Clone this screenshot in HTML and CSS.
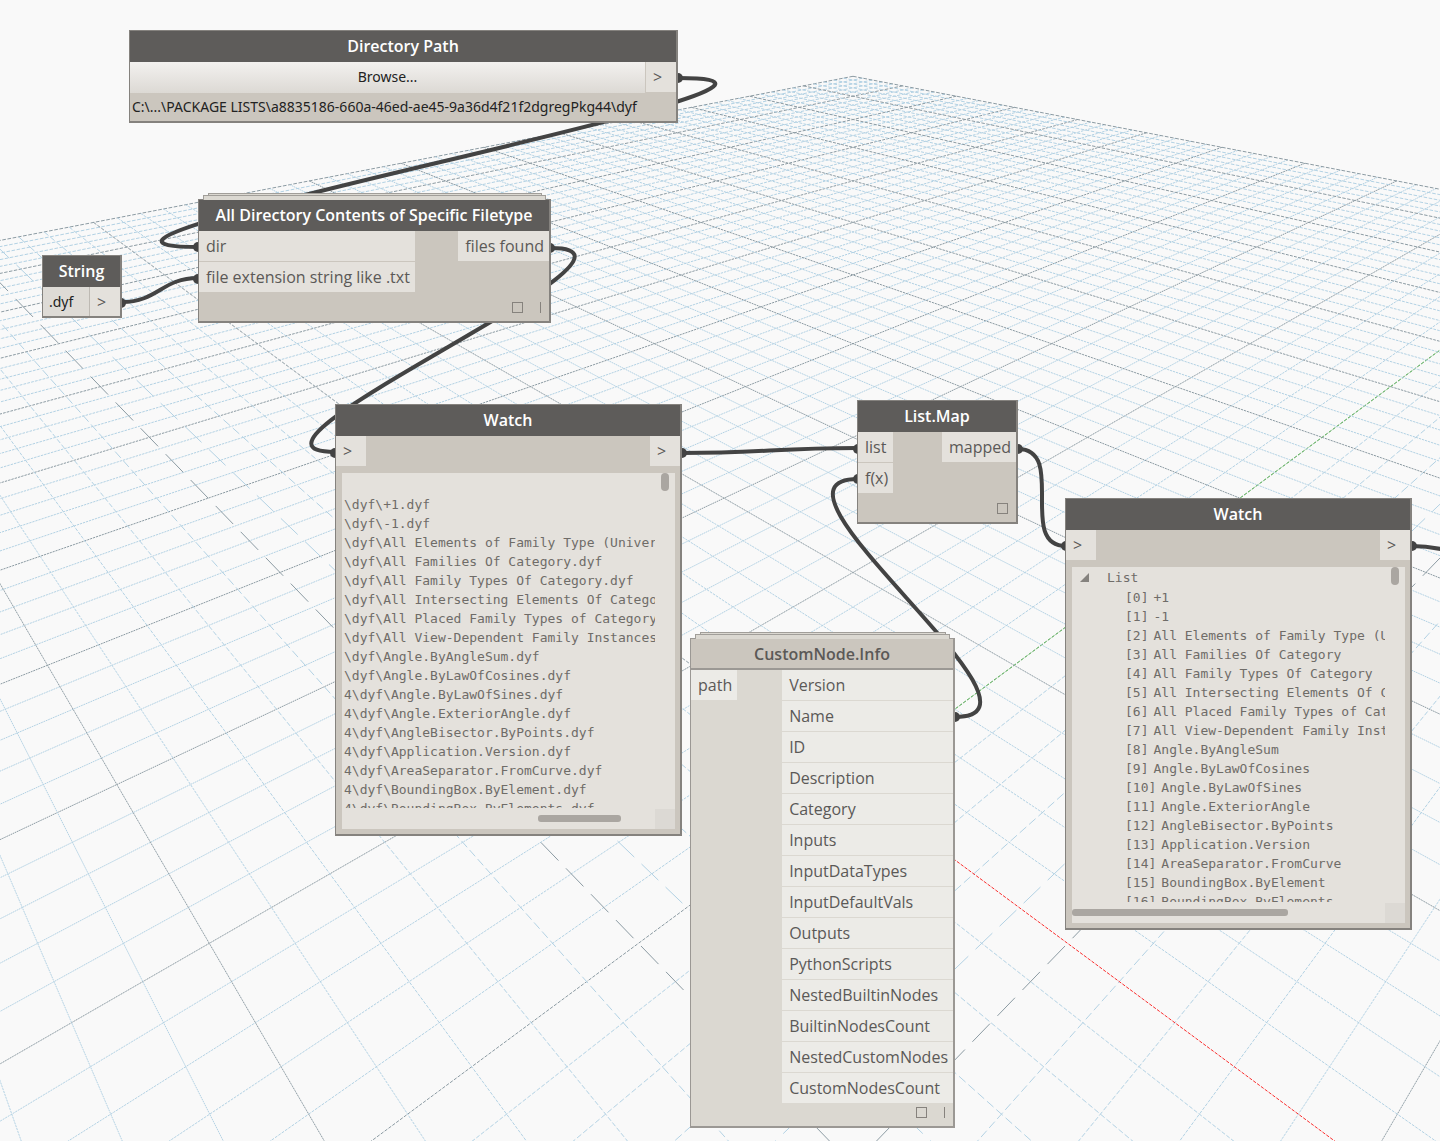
FILE: index.html
```html
<!DOCTYPE html>
<html lang="en">
<head>
    <meta charset="UTF-8">
    <meta name="viewport" content="width=device-width, initial-scale=1.0">
    <title>Package Nodes</title>
    <link rel="stylesheet" href="styles.css">
</head>
<body>
    <main class="workspace">
        <svg class="grid" id="grid" aria-hidden="true"></svg>

        <svg class="wires" aria-hidden="true">
            <path d="M679 78 C908 78 -31 247 198 247"/>
            <path d="M122 302 C158 302 162 278 198 278"/>
            <path d="M551 248 C685 248 201 452 335 452"/>
            <path d="M682 453 C761 453 778 448 857 448"/>
            <path d="M1018 449 C1067 449 1017 546 1066 546"/>
            <path d="M955 717 C1071 717 742 479 858 479"/>
            <path d="M1412 546 C1430 546 1450 550 1470 558"/>
            <g class="ends">
                <circle cx="678" cy="78" r="5"/>
                <circle cx="198" cy="247" r="5"/>
                <circle cx="121" cy="303" r="5"/>
                <circle cx="198" cy="279" r="5"/>
                <circle cx="550" cy="248" r="5"/>
                <circle cx="335" cy="453" r="5"/>
                <circle cx="682" cy="453" r="5"/>
                <circle cx="858" cy="449" r="5"/>
                <circle cx="858" cy="479" r="5"/>
                <circle cx="1018" cy="449" r="5"/>
                <circle cx="1066" cy="546" r="5"/>
                <circle cx="1412" cy="546" r="5"/>
                <circle cx="955" cy="717" r="5"/>
            </g>
        </svg>

        <section class="node node-directory">
            <h2>Directory Path</h2>
            <div class="row">
                <button class="browse" type="button">Browse...</button>
                <span class="port port-arrow">&gt;</span>
            </div>
            <p class="path">C:\...\PACKAGE LISTS\a8835186-660a-46ed-ae45-9a36d4f21f2dgregPkg44\dyf</p>
        </section>

        <section class="node node-string">
            <h2>String</h2>
            <div class="row">
                <input class="value" type="text" value=".dyf" aria-label="String value">
                <span class="port port-arrow">&gt;</span>
            </div>
        </section>

        <section class="node node-contents stacked">
            <h2>All Directory Contents of Specific Filetype</h2>
            <div class="ports">
                <ul class="inputs">
                    <li class="port">dir</li>
                    <li class="port">file extension string like .txt</li>
                </ul>
                <ul class="outputs">
                    <li class="port">files found</li>
                </ul>
            </div>
            <div class="footer"><span class="box"></span><span class="bar"></span></div>
        </section>

        <section class="node node-watch watch-files">
            <h2>Watch</h2>
            <div class="ports">
                <span class="port port-arrow">&gt;</span>
                <span class="port port-arrow">&gt;</span>
            </div>
            <div class="viewer">
                <ul class="lines">
                    <li>\dyf\+1.dyf</li>
                    <li>\dyf\-1.dyf</li>
                    <li>\dyf\All Elements of Family Type (Universal).dyf</li>
                    <li>\dyf\All Families Of Category.dyf</li>
                    <li>\dyf\All Family Types Of Category.dyf</li>
                    <li>\dyf\All Intersecting Elements Of Category.dyf</li>
                    <li>\dyf\All Placed Family Types of Category.dyf</li>
                    <li>\dyf\All View-Dependent Family Instances.dyf</li>
                    <li>\dyf\Angle.ByAngleSum.dyf</li>
                    <li>\dyf\Angle.ByLawOfCosines.dyf</li>
                    <li>4\dyf\Angle.ByLawOfSines.dyf</li>
                    <li>4\dyf\Angle.ExteriorAngle.dyf</li>
                    <li>4\dyf\AngleBisector.ByPoints.dyf</li>
                    <li>4\dyf\Application.Version.dyf</li>
                    <li>4\dyf\AreaSeparator.FromCurve.dyf</li>
                    <li>4\dyf\BoundingBox.ByElement.dyf</li>
                    <li>4\dyf\BoundingBox.ByElements.dyf</li>
                </ul>
                <span class="thumb-y"></span>
                <span class="thumb-x"></span>
                <span class="corner"></span>
            </div>
        </section>

        <section class="node node-map">
            <h2>List.Map</h2>
            <div class="ports">
                <ul class="inputs">
                    <li class="port">list</li>
                    <li class="port">f(x)</li>
                </ul>
                <ul class="outputs">
                    <li class="port">mapped</li>
                </ul>
            </div>
            <div class="footer"><span class="box"></span></div>
        </section>

        <section class="node node-info stacked">
            <h2>CustomNode.Info</h2>
            <div class="ports">
                <ul class="inputs">
                    <li class="port">path</li>
                </ul>
                <ul class="outputs">
                    <li class="port">Version</li>
                    <li class="port">Name</li>
                    <li class="port">ID</li>
                    <li class="port">Description</li>
                    <li class="port">Category</li>
                    <li class="port">Inputs</li>
                    <li class="port">InputDataTypes</li>
                    <li class="port">InputDefaultVals</li>
                    <li class="port">Outputs</li>
                    <li class="port">PythonScripts</li>
                    <li class="port">NestedBuiltinNodes</li>
                    <li class="port">BuiltinNodesCount</li>
                    <li class="port">NestedCustomNodes</li>
                    <li class="port">CustomNodesCount</li>
                </ul>
            </div>
            <div class="footer"><span class="box"></span><span class="bar"></span></div>
        </section>

        <section class="node node-watch watch-names">
            <h2>Watch</h2>
            <div class="ports">
                <span class="port port-arrow">&gt;</span>
                <span class="port port-arrow">&gt;</span>
            </div>
            <div class="viewer">
                <div class="lines">
                    <p class="tree-head">
                        <svg width="9" height="9" viewBox="0 0 9 9"><path d="M9 0 V9 H0 Z"/></svg>
                        List
                    </p>
                    <ul class="tree">
                        <li><span>[0]</span>+1</li>
                        <li><span>[1]</span>-1</li>
                        <li><span>[2]</span>All Elements of Family Type (Universal)</li>
                        <li><span>[3]</span>All Families Of Category</li>
                        <li><span>[4]</span>All Family Types Of Category</li>
                        <li><span>[5]</span>All Intersecting Elements Of Category</li>
                        <li><span>[6]</span>All Placed Family Types of Category</li>
                        <li><span>[7]</span>All View-Dependent Family Instances</li>
                        <li><span>[8]</span>Angle.ByAngleSum</li>
                        <li><span>[9]</span>Angle.ByLawOfCosines</li>
                        <li><span>[10]</span>Angle.ByLawOfSines</li>
                        <li><span>[11]</span>Angle.ExteriorAngle</li>
                        <li><span>[12]</span>AngleBisector.ByPoints</li>
                        <li><span>[13]</span>Application.Version</li>
                        <li><span>[14]</span>AreaSeparator.FromCurve</li>
                        <li><span>[15]</span>BoundingBox.ByElement</li>
                        <li><span>[16]</span>BoundingBox.ByElements</li>
                    </ul>
                </div>
                <span class="thumb-y"></span>
                <span class="thumb-x"></span>
                <span class="corner"></span>
            </div>
        </section>
    </main>

    <script src="grid.js"></script>
</body>
</html>
```
FILE: styles.css
```css
* {
    box-sizing: border-box;
}
body {
    margin: 0;
    background-color: #f9f9f9;
    font-family: "Open Sans", "Noto Sans", sans-serif;
    font-size: 16px;
    color: #5b5957;
}
h2, p, ul {
    margin: 0;
    padding: 0;
}
ul {
    list-style: none;
}
.workspace {
    position: relative;
    min-height: 100vh;
    overflow: hidden;
}
.grid, .wires {
    position: absolute;
    top: 0;
    left: 0;
    width: 100%;
    height: 100%;
}
.grid line {
    stroke-width: 1;
}
.grid .minor {
    stroke: #b3d2e4;
}
.grid .major {
    stroke: #8c9ba3;
}
.grid .axis-x {
    stroke: #fb3030;
}
.grid .axis-y {
    stroke: #3f9f3f;
}
.wires path {
    fill: none;
    stroke: #434343;
    stroke-width: 4;
}
.wires .ends {
    fill: #434343;
}

/* nodes */
.node {
    position: absolute;
    border: 1px solid #85827e;
    border-width: 1px 2px 2px 1px;
    background-color: #cbc6be;
}
.node h2 {
    height: 31px;
    line-height: 31px;
    background-color: #5e5c5a;
    color: #fff;
    font-size: 16px;
    font-weight: 600;
    text-align: center;
    white-space: nowrap;
}
.row, .ports {
    display: flex;
    justify-content: space-between;
}
.inputs, .outputs {
    display: flex;
    flex-direction: column;
    gap: 1px;
}
.port {
    height: 30px;
    line-height: 30px;
    padding: 0 5px 0 7px;
    background-color: #e4e1dc;
    white-space: nowrap;
}
.port-arrow {
    width: 30px;
}
.footer {
    display: flex;
    justify-content: flex-end;
    gap: 17px;
    padding: 10px 8px 8px;
}
.box {
    width: 11px;
    height: 11px;
    border: 1px solid #86827d;
}
.bar {
    width: 1px;
    height: 11px;
    background-color: #86827d;
}

/* plates behind a custom node */
.stacked::before, .stacked::after {
    content: "";
    position: absolute;
    border: 1px solid #a19e99;
    border-bottom: none;
    background-color: #dbd8d1;
}
.stacked::before {
    top: -7px;
    left: 9px;
    right: 7px;
    height: 3px;
}
.stacked::after {
    top: -5px;
    left: 4px;
    right: 3px;
    height: 4px;
}

.node-directory {
    left: 129px;
    top: 30px;
    width: 549px;
}
.browse, .path, .value {
    color: #222;
    font-family: "Noto Sans", "Open Sans", sans-serif;
    font-size: 14px;
}
.browse {
    flex: 1;
    height: 31px;
    padding: 0 0 3px;
    border: none;
    border-right: 1px solid #cbc6be;
    background: linear-gradient(#f3f1ef, #dcd9d4);
}
.path {
    height: 28px;
    line-height: 28px;
    padding-left: 2px;
    white-space: nowrap;
}
.node-string {
    left: 42px;
    top: 255px;
    width: 80px;
}
.value {
    flex: 1;
    min-width: 0;
    height: 29px;
    padding: 0 6px;
    border: none;
    border-right: 1px solid #bdb9b3;
    background-color: #dedbd6;
}
.node-string .port {
    height: 29px;
}
.node-contents {
    left: 198px;
    top: 199px;
    width: 353px;
}
.node-map {
    left: 857px;
    top: 400px;
    width: 161px;
}

/* watch nodes */
.node-watch {
    width: 347px;
}
.watch-files {
    left: 335px;
    top: 404px;
}
.watch-names {
    left: 1065px;
    top: 498px;
}
.viewer {
    position: relative;
    margin: 7px 5px 5px 6px;
    padding: 0 20px 21px 0;
    background-color: #e4e1dc;
}
.lines {
    height: 335px;
    overflow: hidden;
    color: #6f6c68;
    font-family: "DejaVu Sans Mono", monospace;
    font-size: 13px;
    line-height: 19px;
    white-space: nowrap;
}
.watch-files .lines {
    padding: 22px 0 0 2px;
}
.tree-head {
    display: flex;
    align-items: center;
    gap: 18px;
    height: 21px;
    padding-left: 8px;
}
.tree-head svg {
    fill: #85827e;
}
.tree {
    padding-left: 53px;
}
.tree li {
    display: flex;
    gap: 5px;
}
.thumb-y, .thumb-x, .corner {
    position: absolute;
}
.thumb-y {
    top: 0;
    right: 6px;
    width: 8px;
    height: 18px;
    border-radius: 4px;
    background-color: #aaa6a1;
}
.thumb-x {
    bottom: 7px;
    left: 0;
    width: 216px;
    height: 7px;
    border-radius: 3px;
    background-color: #aaa6a1;
}
.watch-files .thumb-x {
    left: 196px;
    width: 83px;
}
.corner {
    right: 0;
    bottom: 0;
    width: 20px;
    height: 20px;
    background-color: #dcd9d4;
}

.node-info {
    left: 690px;
    top: 638px;
    width: 265px;
    border-color: #9b9894;
    background-color: #dbd8d1;
}
.node-info h2 {
    background-color: #cbc6be;
    border-bottom: 2px solid #9b9894;
    color: #5b5957;
}
.node-info .port {
    background-color: #ecebe7;
}
.node-info .footer {
    padding: 4px 8px 8px;
}
```
FILE: grid.js
```js
// Ground plane seen along its diagonal. a and b are counted in major cells
// from the far corner.
const CENTER_X = 853;
const HORIZON_Y = -172.5;
const CORNER_Z = 13.513;
const ORIGIN = 10;
const grid = document.getElementById('grid');

function project(a, b) {
    const z = CORNER_Z - (a + b) / 2;
    return {
        x: CENTER_X + 1293 * (a - b) / 2 / z,
        y: HORIZON_Y + 3362 / z
    };
}

function addLine(p, q, className) {
    const line = document.createElementNS('http://www.w3.org/2000/svg', 'line');
    line.setAttribute('x1', p.x);
    line.setAttribute('y1', p.y);
    line.setAttribute('x2', q.x);
    line.setAttribute('y2', q.y);
    line.setAttribute('class', className);

    // dashes follow the pixel steps of the slope
    const slope = Math.abs((q.y - p.y) / (q.x - p.x));
    const s = Math.min(slope, 1 / slope);
    const step = s < 0.6 ? 1 / s : 1 / (1 - s);
    const period = Math.min(step * Math.sqrt(1 + s * s), 36);
    line.setAttribute('stroke-dasharray', period * 0.7 + ' ' + period * 0.3);
    grid.appendChild(line);
}

function drawFamily(swap) {
    for (let n = 0; n <= 100; n++) {
        const fixed = n / 5;
        const end = Math.min(20, 22.6 - fixed);
        const at = t => swap ? project(t, fixed) : project(fixed, t);
        const name = n % 5 === 0 ? 'major' : 'minor';
        if (fixed === ORIGIN) {
            // axes: x runs towards the viewer, y away from it
            addLine(at(0), at(ORIGIN), swap ? name : 'axis-y');
            addLine(at(ORIGIN), at(end), swap ? 'axis-x' : name);
        } else {
            addLine(at(0), at(end), name);
        }
    }
}

drawFamily(false);
drawFamily(true);
```
